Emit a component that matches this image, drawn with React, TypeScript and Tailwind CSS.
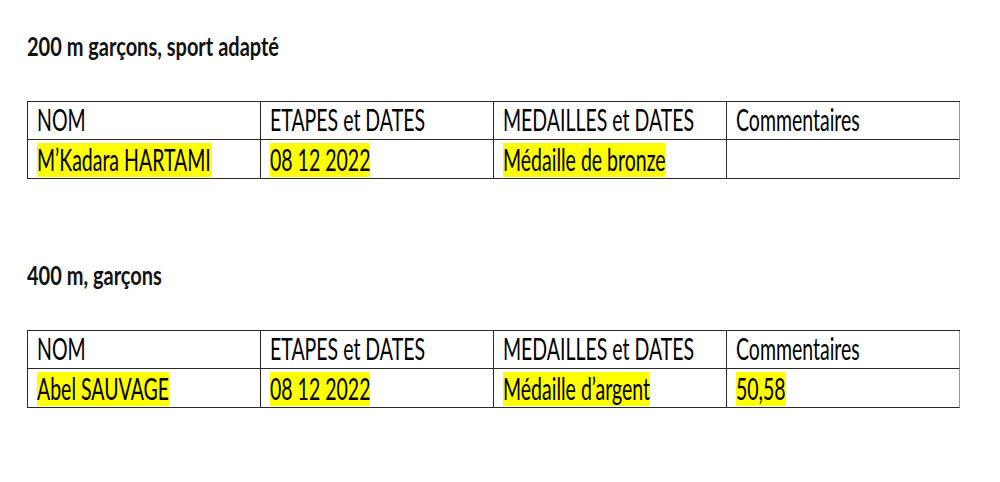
const sections = [
  {
    title: "200 m garçons, sport adapté",
    row: ["M’Kadara HARTAMI", "08 12 2022", "Médaille de bronze", ""],
  },
  {
    title: "400 m, garçons",
    row: ["Abel SAUVAGE", "08 12 2022", "Médaille d’argent", "50,58"],
  },
]

const headers = ["NOM", "ETAPES et DATES", "MEDAILLES et DATES", "Commentaires"]

const ResultTable = ({ row }: { row: string[] }) => (
  <div className="grid grid-cols-4 w-[933px] border-t border-l border-[#2a2a2a] text-[19.5px] text-black">
    {headers.map((h, i) => (
      <div key={h} className={`h-[38px] border-b border-[#2a2a2a] flex items-center pl-[9px] ${i === 3 ? "border-r border-r-[#9a9a9a]" : "border-r"}`}>
        <span className="inline-block scale-y-[1.55] leading-none -mt-[2px]">{h}</span>
      </div>
    ))}
    {row.map((cell, i) => (
      <div key={i} className={`h-[39px] border-b border-[#2a2a2a] flex items-end pb-[1px] pl-[9px] ${i === 3 ? "border-r border-r-[#9a9a9a]" : "border-r"}`}>
        {cell && (
          <span className="inline-flex items-center h-[34px] bg-[#ffff00]">
            <span className="inline-block scale-y-[1.55] leading-none">{cell}</span>
          </span>
        )}
      </div>
    ))}
  </div>
)

export default function App() {
  return (
    <div className="w-[1000px] h-[482px] bg-white pl-[27px] pt-[34px] font-['Lato',sans-serif]">
      {sections.map((s, idx) => (
        <section key={idx} className={idx === 0 ? "" : "mt-[84px]"}>
          <h2 className="h-[24px] flex items-center text-[20px] font-bold text-[#111]">
            <span className="inline-block scale-y-[1.3] leading-none">{s.title}</span>
          </h2>
          <div className="mt-[43px]">
            <ResultTable row={s.row} />
          </div>
        </section>
      ))}
    </div>
  )
}
